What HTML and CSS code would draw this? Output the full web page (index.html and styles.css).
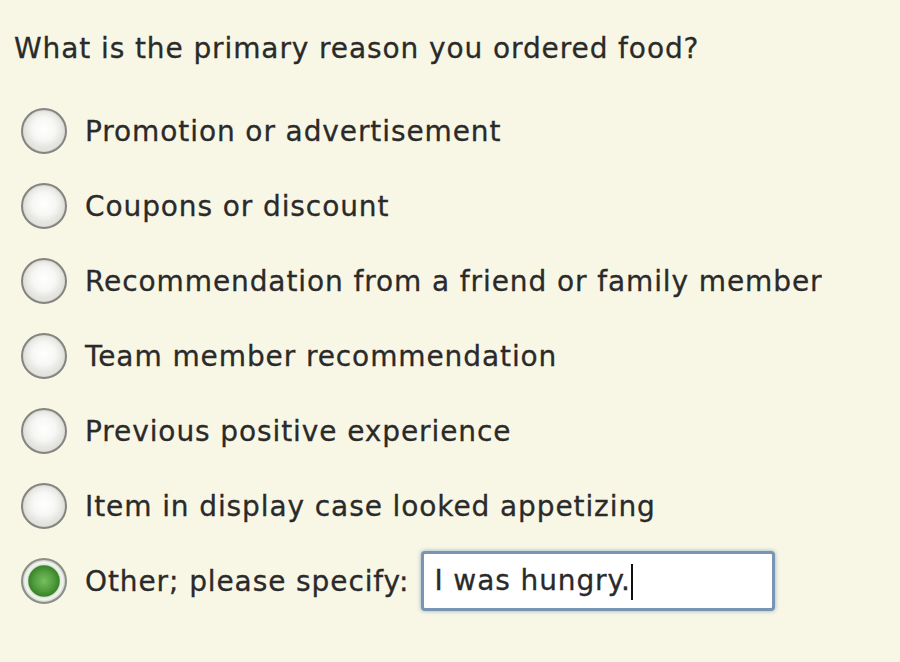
FILE: index.html
```html
<!DOCTYPE html>
<html lang="en">
<head>
    <meta charset="UTF-8">
    <title>Survey</title>
    <link rel="stylesheet" href="styles.css">
</head>
<body>
    <div class="question">
        <p class="title">What is the primary reason you ordered food?</p>

        <div class="options">
            <label class="option"><input type="radio" name="reason"><span>Promotion or advertisement</span></label>
            <label class="option"><input type="radio" name="reason"><span>Coupons or discount</span></label>
            <label class="option"><input type="radio" name="reason"><span>Recommendation from a friend or family member</span></label>
            <label class="option"><input type="radio" name="reason"><span>Team member recommendation</span></label>
            <label class="option"><input type="radio" name="reason"><span>Previous positive experience</span></label>
            <label class="option"><input type="radio" name="reason"><span>Item in display case looked appetizing</span></label>
            <label class="option"><input type="radio" name="reason" checked><span>Other; please specify:</span>
                <span class="other">I was hungry.<span class="caret"></span></span>
            </label>
        </div>
    </div>
</body>
</html>
```

FILE: styles.css
```css
body {
    margin: 0;
    background-color: #f8f6e5;
    color: #2a2a2a;
    font-family: "DejaVu Sans", Verdana, sans-serif;
    font-size: 28px;
    letter-spacing: 0.9px;
    -webkit-text-stroke: 0.3px #2a2a2a;
}

.question {
    padding: 32px 14px;
}

.title {
    margin: 0 0 43px;
}

.options {
    display: flex;
    flex-direction: column;
    gap: 29px;
    padding-left: 7px;
}

.option {
    display: flex;
    align-items: center;
    gap: 18px;
    height: 46px;
}

.option input {
    appearance: none;
    -webkit-appearance: none;
    margin: 0;
    width: 46px;
    height: 46px;
    border-radius: 50%;
    border: 2px solid #858580;
    background: radial-gradient(circle closest-side at 50% 45%, #ffffff 0%, #f7f7f5 60%, #e4e4e0 100%);
    box-shadow: inset 0 0 2px #c2c2bd;
    flex-shrink: 0;
}

.option input:checked {
    border-color: #8a9087;
    background: radial-gradient(circle closest-side at 50% 50%, #78bf60 0%, #4f9b3b 50%, #3a832b 72%, #dfe8d8 78%, #f4f6f0 88%, #d6dad2 100%);
}

.other {
    display: inline-block;
    box-sizing: border-box;
    margin-left: -6px;
    width: 354px;
    height: 60px;
    line-height: 54px;
    padding: 0 10px;
    background: #fff;
    border: 3px solid #7895b4;
    border-radius: 4px;
    box-shadow: 0 0 4px #93abc6;
}

.caret {
    display: inline-block;
    width: 2px;
    height: 36px;
    vertical-align: middle;
    background: #111;
}
```
